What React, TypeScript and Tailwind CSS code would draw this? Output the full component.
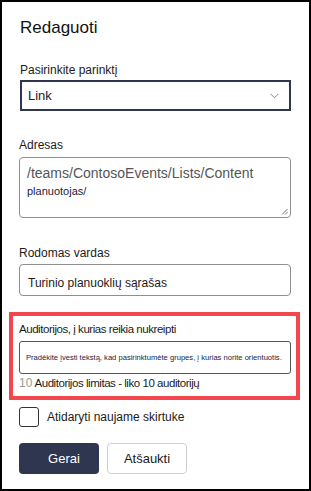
const font = { fontFamily: '"Liberation Sans", Arial, sans-serif' };

function Label({ children, className = "" }: { children: React.ReactNode; className?: string }) {
  return <div className={"text-[12px] leading-[18px] text-[#1b1b1b] " + className}>{children}</div>;
}

export default function App() {
  return (
    <div className="w-[311px] h-[491px] border-2 border-black bg-white" style={font}>
      <div className="pl-[17px] pr-[18px] flex flex-col">
        <div className="mt-[15px] ml-[1px] text-[17px] leading-[22px] text-[#111]">Redaguoti</div>

        <Label className="mt-[22px] ml-[1px]">Pasirinkite parinktį</Label>
        <div className="mt-[1px] ml-[1px] h-[31px] w-[271px] border-2 border-[#2e3650] flex items-center justify-between pl-[6px] pr-[10px]">
          <span className="text-[13px] text-[#222]">Link</span>
          <svg width="9" height="6" viewBox="0 0 9 6" fill="none">
            <path d="M0.5 0.8 L4.5 4.8 L8.5 0.8" stroke="#8a8a8a" strokeWidth="1" />
          </svg>
        </div>

        <Label className="mt-[25px]">Adresas</Label>
        <div className="mt-[3px] h-[61px] w-[272px] border border-[#8f8f8f] rounded-[4px] relative pl-[7px] pt-[6px]">
          <div className="text-[14px] leading-[19px] text-[#555]">/teams/ContosoEvents/Lists/Content</div>
          <div className="text-[11px] leading-[16px] text-[#1c1c3c]">planuotojas/</div>
          <svg className="absolute right-[2px] bottom-[2px]" width="7" height="7" viewBox="0 0 7 7">
            <path d="M6.5 1 L1 6.5 M6.5 4 L4 6.5" stroke="#777" strokeWidth="1" />
          </svg>
        </div>

        <Label className="mt-[26px]">Rodomas vardas</Label>
        <div className="mt-[2px] h-[32px] w-[272px] border border-[#8f8f8f] rounded-[4px] flex items-center pl-[8px] pt-[6px]">
          <span className="text-[12px] text-[#1b1b1b]">Turinio planuoklių sąrašas</span>
        </div>

        <div className="mt-[16px] ml-[-10px] w-[291px] h-[88px] border-4 border-[#f2474c] pl-[6px]">
          <div className="mt-[4px] text-[11.5px] leading-[18px] tracking-[-0.45px] text-[#1b1b1b] whitespace-nowrap">
            Auditorijos, į kurias reikia nukreipti
          </div>
          <div className="mt-[3px] h-[33px] w-[272px] border border-[#555] rounded-[3px] flex items-center pl-[6px]">
            <span className="text-[7.6px] text-[#1c1c3c] whitespace-nowrap">
              Pradėkite įvesti tekstą, kad pasirinktumėte grupes, į kurias norite orientuotis.
            </span>
          </div>
          <div className="text-[11.5px] leading-[18px] tracking-[-0.45px] text-[#1b1b1b] whitespace-nowrap">
            <span className="text-[12px] tracking-normal text-[#9a9a9a]">10</span> Auditorijos limitas - liko 10 auditorijų
          </div>
        </div>

        <div className="mt-[7px] flex items-center">
          <div className="w-[20px] h-[20px] border border-[#333] rounded-[3px]" />
          <span className="ml-[8px] text-[12px] text-[#1b1b1b]">Atidaryti naujame skirtuke</span>
        </div>

        <div className="mt-[16px] flex gap-[8px]">
          <button className="w-[80px] h-[31px] rounded-[4px] bg-[#2e3650] text-white text-[13px] pl-[10px]">Gerai</button>
          <button className="w-[80px] h-[31px] rounded-[4px] border border-[#cfcfcf] bg-white text-[#1b1b1b] text-[13px]">Atšaukti</button>
        </div>
      </div>
    </div>
  );
}
